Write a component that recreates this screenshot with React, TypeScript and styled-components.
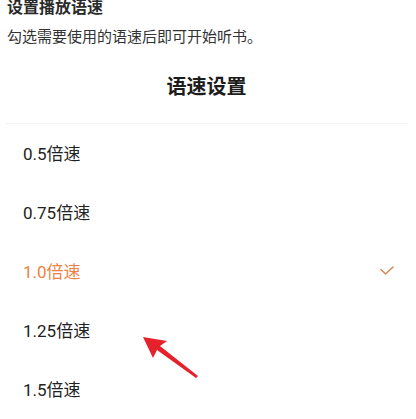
import styled, { createGlobalStyle } from 'styled-components'

const GlobalStyle = createGlobalStyle`
  html, body {
    margin: 0;
    padding: 0;
    background: #ffffff;
  }
  body {
    font-family: Roboto, "Noto Sans CJK SC", sans-serif;
    color: #222;
  }
`

const Page = styled.div`
  position: relative;
  width: 416px;
  height: 419px;
  overflow: hidden;
  background: #fff;
`

const Intro = styled.div`
  padding: 0 7px;
`

const Heading = styled.div`
  font-size: 16px;
  line-height: 16px;
  font-weight: 700;
  color: #2a2a2a;
`

const Hint = styled.div`
  margin-top: 11px;
  font-size: 15px;
  line-height: 20px;
  color: #333;
`

const Sheet = styled.div`
  padding: 0 8px 0 5px;
`

const SheetTitle = styled.div`
  height: 76px;
  display: flex;
  align-items: center;
  justify-content: center;
  font-size: 20px;
  font-weight: 700;
  color: #1c1c1c;
  border-bottom: 1px solid #f3f3f3;
`

const Option = styled.div<{ $active?: boolean }>`
  height: 59px;
  display: flex;
  align-items: center;
  justify-content: space-between;
  padding: 0 14px 2px 18px;
  box-sizing: border-box;
  font-size: 17px;
  color: ${(p) => (p.$active ? '#ee8244' : '#222')};
`

const Check = styled.svg`
  width: 14px;
  height: 10px;
`

const Arrow = styled.svg`
  position: absolute;
  left: 140px;
  top: 333px;
  width: 62px;
  height: 48px;
`

const speeds = ['0.5', '0.75', '1.0', '1.25', '1.5']

export default function App() {
  return (
    <Page>
      <GlobalStyle />
      <Intro>
        <Heading>设置播放语速</Heading>
        <Hint>勾选需要使用的语速后即可开始听书。</Hint>
      </Intro>
      <Sheet>
        <SheetTitle>语速设置</SheetTitle>
        {speeds.map((s) => (
          <Option key={s} $active={s === '1.0'}>
            <span>{s}倍速</span>
            {s === '1.0' && (
              <Check viewBox="0 0 14 10">
                <path d="M1 3.5 L5.5 8 L13 1" fill="none" stroke="#d98a5c" strokeWidth="1.6" strokeLinecap="round" strokeLinejoin="round" />
              </Check>
            )}
          </Option>
        ))}
      </Sheet>
      <Arrow viewBox="0 0 62 48">
        <path d="M3 4 L27 8 L20 13 L58 43 L56 45 L17 17 L13 25 Z" fill="#e5222b" />
      </Arrow>
    </Page>
  )
}
